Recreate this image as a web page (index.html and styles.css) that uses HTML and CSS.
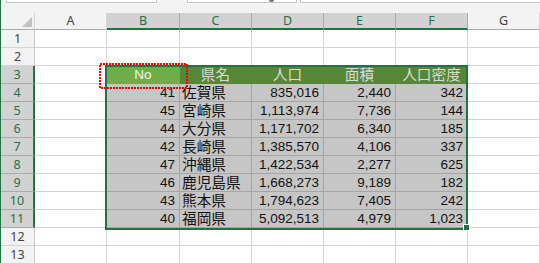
FILE: index.html
```html
<!DOCTYPE html>
<html lang="ja">
<head>
<meta charset="utf-8">
<link rel="stylesheet" href="styles.css">
</head>
<body>
<div class="app">
  <div class="frame"></div>
  <div class="topbar">
    <div class="box namebox"></div>
    <div class="box midbox"><span class="knob"></span></div>
    <div class="box fxbox"></div>
  </div>
  <div class="sheet">
    <div class="corner"><span class="tri"></span></div>
    <div class="ch">A</div>
    <div class="ch sel">B</div>
    <div class="ch sel">C</div>
    <div class="ch sel">D</div>
    <div class="ch sel">E</div>
    <div class="ch sel">F</div>
    <div class="ch">G</div>

    <div class="rh">1</div><div class="c"></div><div class="c"></div><div class="c"></div><div class="c"></div><div class="c"></div><div class="c"></div><div class="c"></div>
    <div class="rh">2</div><div class="c"></div><div class="c"></div><div class="c"></div><div class="c"></div><div class="c"></div><div class="c"></div><div class="c"></div>

    <div class="rh sel">3</div><div class="c"></div>
    <div class="c hd active"><span class="num">No</span></div>
    <div class="c hd"><span class="jp">県名</span></div>
    <div class="c hd"><span class="jp">人口</span></div>
    <div class="c hd"><span class="jp">面積</span></div>
    <div class="c hd"><span class="jp">人口密度</span></div>
    <div class="c"></div>

    <div class="rh sel">4</div><div class="c"></div>
    <div class="c d r"><span class="num">41</span></div><div class="c d l"><span class="jp">佐賀県</span></div><div class="c d r"><span class="num">835,016</span></div><div class="c d r"><span class="num">2,440</span></div><div class="c d r"><span class="num">342</span></div>
    <div class="c"></div>

    <div class="rh sel">5</div><div class="c"></div>
    <div class="c d r"><span class="num">45</span></div><div class="c d l"><span class="jp">宮崎県</span></div><div class="c d r"><span class="num">1,113,974</span></div><div class="c d r"><span class="num">7,736</span></div><div class="c d r"><span class="num">144</span></div>
    <div class="c"></div>

    <div class="rh sel">6</div><div class="c"></div>
    <div class="c d r"><span class="num">44</span></div><div class="c d l"><span class="jp">大分県</span></div><div class="c d r"><span class="num">1,171,702</span></div><div class="c d r"><span class="num">6,340</span></div><div class="c d r"><span class="num">185</span></div>
    <div class="c"></div>

    <div class="rh sel">7</div><div class="c"></div>
    <div class="c d r"><span class="num">42</span></div><div class="c d l"><span class="jp">長崎県</span></div><div class="c d r"><span class="num">1,385,570</span></div><div class="c d r"><span class="num">4,106</span></div><div class="c d r"><span class="num">337</span></div>
    <div class="c"></div>

    <div class="rh sel">8</div><div class="c"></div>
    <div class="c d r"><span class="num">47</span></div><div class="c d l"><span class="jp">沖縄県</span></div><div class="c d r"><span class="num">1,422,534</span></div><div class="c d r"><span class="num">2,277</span></div><div class="c d r"><span class="num">625</span></div>
    <div class="c"></div>

    <div class="rh sel">9</div><div class="c"></div>
    <div class="c d r"><span class="num">46</span></div><div class="c d l"><span class="jp">鹿児島県</span></div><div class="c d r"><span class="num">1,668,273</span></div><div class="c d r"><span class="num">9,189</span></div><div class="c d r"><span class="num">182</span></div>
    <div class="c"></div>

    <div class="rh sel">10</div><div class="c"></div>
    <div class="c d r"><span class="num">43</span></div><div class="c d l"><span class="jp">熊本県</span></div><div class="c d r"><span class="num">1,794,623</span></div><div class="c d r"><span class="num">7,405</span></div><div class="c d r"><span class="num">242</span></div>
    <div class="c"></div>

    <div class="rh sel">11</div><div class="c"></div>
    <div class="c d r"><span class="num">40</span></div><div class="c d l"><span class="jp">福岡県</span></div><div class="c d r"><span class="num">5,092,513</span></div><div class="c d r"><span class="num">4,979</span></div><div class="c d r"><span class="num">1,023</span></div>
    <div class="c"></div>

    <div class="rh">12</div><div class="c"></div><div class="c"></div><div class="c"></div><div class="c"></div><div class="c"></div><div class="c"></div><div class="c"></div>
    <div class="rh">13</div><div class="c"></div><div class="c"></div><div class="c"></div><div class="c"></div><div class="c"></div><div class="c"></div><div class="c"></div>
  </div>

  <div class="selbox"></div>
  <div class="handle"></div>
  <svg class="ants" width="89" height="26" viewBox="0 0 89 26">
    <rect x="1" y="1" width="87" height="24" fill="none" stroke="#f00" stroke-width="2" stroke-dasharray="2 1"/>
  </svg>
</div>
</body>
</html>
```

FILE: styles.css
```css
* { box-sizing: border-box; }
html, body { margin: 0; padding: 0; }
body { width: 540px; height: 263px; overflow: hidden; background: #fff; }

.app {
  position: relative;
  width: 540px;
  height: 263px;
  padding-left: 1px;
  overflow: hidden;
  background: #f3f3f3;
}
.frame {
  position: absolute;
  left: 0; top: 0;
  width: 1px; height: 263px;
  background: #217346;
}

.topbar {
  height: 13px;
  display: flex;
  align-items: flex-start;
  background: #f3f3f3;
}
.box {
  height: 3px;
  background: #fff;
  border: 1px solid #c6c6c6;
  border-top: none;
}
.namebox { margin-left: 5px; width: 151px; }
.midbox { margin-left: 30px; width: 110px; position: relative; }
.fxbox { margin-left: 3px; flex: 1; border-right: none; }
.knob {
  position: absolute;
  left: 81px; top: 0;
  width: 5px; height: 2px;
  border-radius: 0 0 3px 3px;
  background: #777;
}

.sheet {
  display: grid;
  grid-template-columns: 34px 72px 73px 72px 72px 72px 72px 72px;
  grid-template-rows: 17px repeat(13, 18px);
  font-family: "Liberation Sans", "Noto Sans CJK JP", sans-serif;
}

.corner {
  background: #f3f3f3;
  border-right: 1px solid #d4d4d4;
  border-bottom: 1px solid #ababab;
  position: relative;
}
.tri {
  position: absolute;
  right: 2px; bottom: 2px;
  width: 0; height: 0;
  border-left: 10px solid transparent;
  border-bottom: 10px solid #c0c0c0;
}

.ch {
  background: #f3f3f3;
  border-right: 1px solid #d4d4d4;
  border-bottom: 1px solid #ababab;
  color: #444;
  font-family: "Noto Sans", "Liberation Sans", sans-serif;
  font-size: 12.5px;
  line-height: 15px;
  display: flex;
  justify-content: center;
  align-items: flex-end;
  padding-bottom: 1px;
}
.ch.sel {
  background: #d2d2d2;
  border-right-color: #ababab;
  border-bottom: 2px solid #217346;
  color: #217346;
  padding-bottom: 0;
}

.rh {
  background: #f3f3f3;
  border-right: 1px solid #c6c6c6;
  border-bottom: 1px solid #d4d4d4;
  color: #444;
  font-family: "Noto Sans", "Liberation Sans", sans-serif;
  font-size: 12.5px;
  line-height: 15px;
  display: flex;
  justify-content: center;
  align-items: flex-end;
  padding-bottom: 1px;
}
.rh.sel {
  background: #d2d2d2;
  border-right: 2px solid #217346;
  border-bottom-color: #ababab;
  color: #217346;
}

.c {
  background: #fff;
  border-right: 1px solid #d4d4d4;
  border-bottom: 1px solid #d4d4d4;
  display: flex;
  align-items: flex-end;
  line-height: 14px;
  padding-bottom: 1px;
  white-space: nowrap;
  overflow: hidden;
}
.num { font-size: 13.5px; }
.jp { font-size: 14.67px; }

.hd {
  background: #578637;
  border-right-color: #578637;
  border-bottom-color: #578637;
  color: #dadada;
  justify-content: center;
}
.hd.active {
  background: #70ad47;
  border-right-color: #70ad47;
  border-bottom-color: #70ad47;
  color: #f4f4f4;
}
.d {
  background: #c6c6c6;
  border-right-color: #a5a5a5;
  border-bottom-color: #a5a5a5;
  color: #111;
}
.r { justify-content: flex-end; padding-right: 4px; }
.l { justify-content: flex-start; padding-left: 2px; }

.selbox {
  position: absolute;
  left: 105px; top: 65px;
  width: 363px; height: 165px;
  border: 2px solid #217346;
  pointer-events: none;
}
.handle {
  position: absolute;
  left: 463px; top: 224px;
  width: 7px; height: 7px;
  background: #217346;
  border: 1px solid #fff;
}
.ants {
  position: absolute;
  left: 99px; top: 63px;
  display: block;
}
```
